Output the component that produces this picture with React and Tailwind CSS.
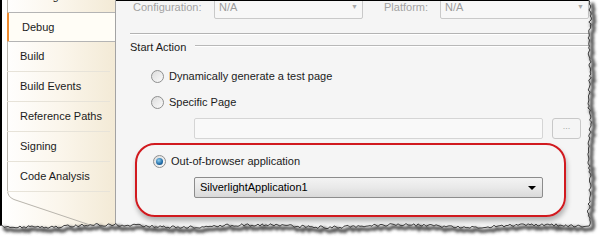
import React from 'react';

// deterministic jitter for the torn paper edge
const jitter = (i) => {
  const s = Math.sin(i * 12.9898 + 78.233) * 43758.5453;
  return s - Math.floor(s);
};

const buildEdge = () => {
  const pts = [];
  // right edge, top to bottom
  for (let y = 0; y <= 226; y += 2) {
    const x = 589.5 + Math.sin(y / 9) * 0.8 + (jitter(y) - 0.5) * 2.6;
    pts.push([x, y]);
  }
  // bottom edge, right to left
  for (let x = 586; x >= 0; x -= 2) {
    const y = 226 + Math.sin(x / 23) * 1.2 + (jitter(x + 500) - 0.5) * 2.8;
    pts.push([x, y]);
  }
  return pts;
};

const edge = buildEdge();
const edgeLine = edge.map(([x, y], i) => `${i ? 'L' : 'M'}${x.toFixed(1)} ${y.toFixed(1)}`).join(' ');

const TornEdge = () => (
  <svg className="absolute inset-0 pointer-events-none" width="600" height="241">
    <defs>
      <filter id="blur" x="-10%" y="-10%" width="120%" height="120%">
        <feGaussianBlur stdDeviation="1.5" />
      </filter>
    </defs>
    <path d={`${edgeLine} L0 241 L600 241 L600 0 Z`} fill="#ffffff" />
    <path d={edgeLine} transform="translate(3 3)" fill="none" stroke="#4f4f4f" strokeWidth="3.5" filter="url(#blur)" />
    <path d={edgeLine} fill="none" stroke="#3d3d3d" strokeWidth="1" />
  </svg>
);

const Radio = ({ checked }) => (
  <span className="w-[13px] h-[13px] rounded-full border border-[#8e8f8f] bg-gradient-to-br from-[#dcdcdc] to-[#fbfbfb] flex items-center justify-center shrink-0">
    {checked && (
      <span className="w-[7px] h-[7px] rounded-full bg-[radial-gradient(circle_at_40%_35%,#8fd0f0,#1f6aa6_60%,#0d3f6e)]" />
    )}
  </span>
);

const NavItem = ({ label, last }) => (
  <div className={`h-[30px] mx-[5px] flex items-center pl-[13px] ${last ? '' : 'border-b border-[#e7e3d9]'}`}>
    {label}
  </div>
);

export default function App() {
  return (
    <div className="relative w-[600px] h-[241px] overflow-hidden bg-white text-[11px] text-[#1b1b1b]" style={{ fontFamily: '"Liberation Sans", Arial, sans-serif' }}>
      <div className="w-[592px] h-[230px] flex border-l-2 border-black">
        {/* side tabs */}
        <div className="relative w-[114px] shrink-0 border-r border-[#a3a3a3] bg-gradient-to-r from-[#ffffff] via-[#fbf6ec] to-[#f3ead6]">
          <svg className="absolute inset-0" width="114" height="230">
            <path d="M5.5 0 V190 Q5.5 197 12 199.5 L100 229" fill="none" stroke="#b9b5ad" strokeWidth="1" />
          </svg>
          <div className="relative mt-[-12px] h-[24px] flex items-end pb-[8px] pl-[18px]">Silverlight</div>
          <div className="relative h-[30px] ml-[5px] flex items-center pl-[13px] bg-[#fffdf6] border-y border-l-2 border-[#b4b4b4] border-l-[#ee8a2e] rounded-l-[2px]">
            Debug
          </div>
          <div className="relative">
            <NavItem label="Build" />
            <NavItem label="Build Events" />
            <NavItem label="Reference Paths" />
            <NavItem label="Signing" />
            <NavItem label="Code Analysis" />
          </div>
        </div>

        {/* main panel */}
        <div className="flex-1 bg-[#f5f5f5] overflow-hidden border-t border-black">
          <div className="mt-[-5px] h-[23px] flex items-center text-[#a2a2a2]">
            <span className="ml-[17px] w-[81px]">Configuration:</span>
            <div className="w-[149px] h-full border border-[#c9c9c9] rounded-[2px] bg-[#f7f7f7] flex items-center justify-between px-[4px] text-[#9b9b9b]">
              <span>N/A</span>
              <span className="text-[7px] text-[#a8a8a8]">▼</span>
            </div>
            <span className="ml-[21px] w-[56px]">Platform:</span>
            <div className="w-[149px] h-full border border-[#c9c9c9] rounded-[2px] bg-[#f7f7f7] flex items-center justify-between px-[4px] text-[#9b9b9b]">
              <span>N/A</span>
              <span className="text-[7px] text-[#a8a8a8]">▼</span>
            </div>
          </div>

          <div className="mt-[14px] ml-[14px] border-t border-[#b3b3b3] border-b border-b-white" />

          <div className="mt-[5px] ml-[14px] h-[14px] flex items-center">
            <span>Start Action</span>
            <div className="flex-1 ml-[9px] mt-[-3px] border-t border-[#b8b8b8] border-b border-b-white" />
          </div>

          <div className="mt-[14px] ml-[35px] h-[16px] flex items-center gap-[5px]">
            <Radio />
            <span>Dynamically generate a test page</span>
          </div>
          <div className="mt-[10px] ml-[35px] h-[16px] flex items-center gap-[5px]">
            <Radio />
            <span>Specific Page</span>
          </div>

          <div className="mt-[8px] ml-[78px] h-[21px] flex gap-[9px]">
            <div className="w-[349px] h-full border border-[#d5d5d5] rounded-[2px] bg-[#f9f9f9]" />
            <div className="w-[29px] h-full border border-[#c8c8c8] rounded-[3px] bg-[#f5f5f5] flex items-center justify-center text-[#a8a8a8] text-[9px] pb-[3px]">...</div>
          </div>

          <div className="mt-[4px] ml-[19px] w-[431px] h-[74px] border-2 border-[#d11a1f] rounded-[20px] shadow-[1px_4px_5px_rgba(0,0,0,0.28)] pt-[8px] pl-[16px]">
            <div className="h-[16px] flex items-center gap-[5px]">
              <Radio checked />
              <span>Out-of-browser application</span>
            </div>
            <div className="mt-[8px] ml-[41px] w-[349px] h-[21px] border border-[#8c8c8c] rounded-[2px] bg-gradient-to-b from-[#f3f3f3] via-[#e9e9e9] to-[#d9d9d9] flex items-center justify-between pl-[5px] pr-[6px] text-black">
              <span>SilverlightApplication1</span>
              <span className="w-0 h-0 border-l-[4px] border-r-[4px] border-t-[4px] border-l-transparent border-r-transparent border-t-black" />
            </div>
          </div>
        </div>
      </div>
      <TornEdge />
    </div>
  );
}
